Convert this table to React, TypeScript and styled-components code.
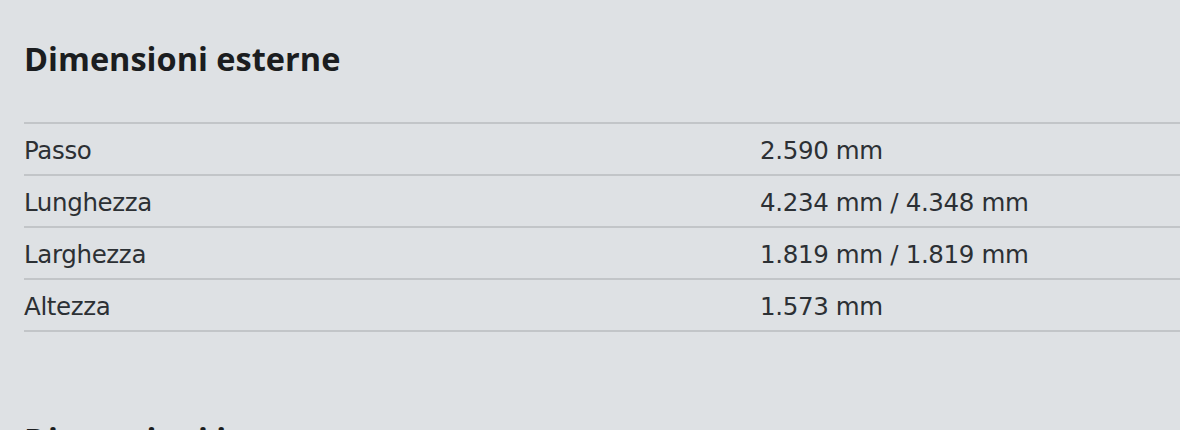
import React from "react";
import styled, { createGlobalStyle } from "styled-components";

const GlobalStyle = createGlobalStyle`
  html, body {
    margin: 0;
    padding: 0;
    background: #dee1e4;
    overflow: hidden;
  }
  body {
    font-family: "DejaVu Sans", "Liberation Sans", sans-serif;
  }
`;

const Page = styled.main`
  display: flex;
  flex-direction: column;
  width: 1180px;
  min-height: 430px;
  background: #dee1e4;
`;

const Section = styled.section`
  display: flex;
  flex-direction: column;
  padding: 41px 0 49px 24px;
`;

const Heading = styled.h2`
  margin: 0 0 45px 0;
  font-family: "Open Sans", "DejaVu Sans", sans-serif;
  font-size: 32.5px;
  line-height: 36px;
  font-weight: 700;
  color: #1b1d20;
`;

const Table = styled.dl`
  margin: 0;
  display: flex;
  flex-direction: column;
  border-top: 2px solid #c2c5c8;
`;

const Row = styled.div`
  display: grid;
  grid-template-columns: 736px 1fr;
  align-items: center;
  box-sizing: border-box;
  height: 52px;
  padding-top: 3px;
  border-bottom: 2px solid #c2c5c8;
`;

const Label = styled.dt`
  margin: 0;
  font-size: 24.5px;
  letter-spacing: -0.35px;
  color: #2c3034;
`;

const Value = styled.dd`
  margin: 0;
  font-size: 24.5px;
  letter-spacing: -0.35px;
  color: #2c3034;
`;

const rows: [string, string][] = [
  ["Passo", "2.590 mm"],
  ["Lunghezza", "4.234 mm / 4.348 mm"],
  ["Larghezza", "1.819 mm / 1.819 mm"],
  ["Altezza", "1.573 mm"],
];

export default function App() {
  return (
    <Page>
      <GlobalStyle />
      <Section>
        <Heading>Dimensioni esterne</Heading>
        <Table>
          {rows.map(([l, v]) => (
            <Row key={l}>
              <Label>{l}</Label>
              <Value>{v}</Value>
            </Row>
          ))}
        </Table>
      </Section>
      <Section>
        <Heading>Dimensioni interne</Heading>
      </Section>
    </Page>
  );
}
